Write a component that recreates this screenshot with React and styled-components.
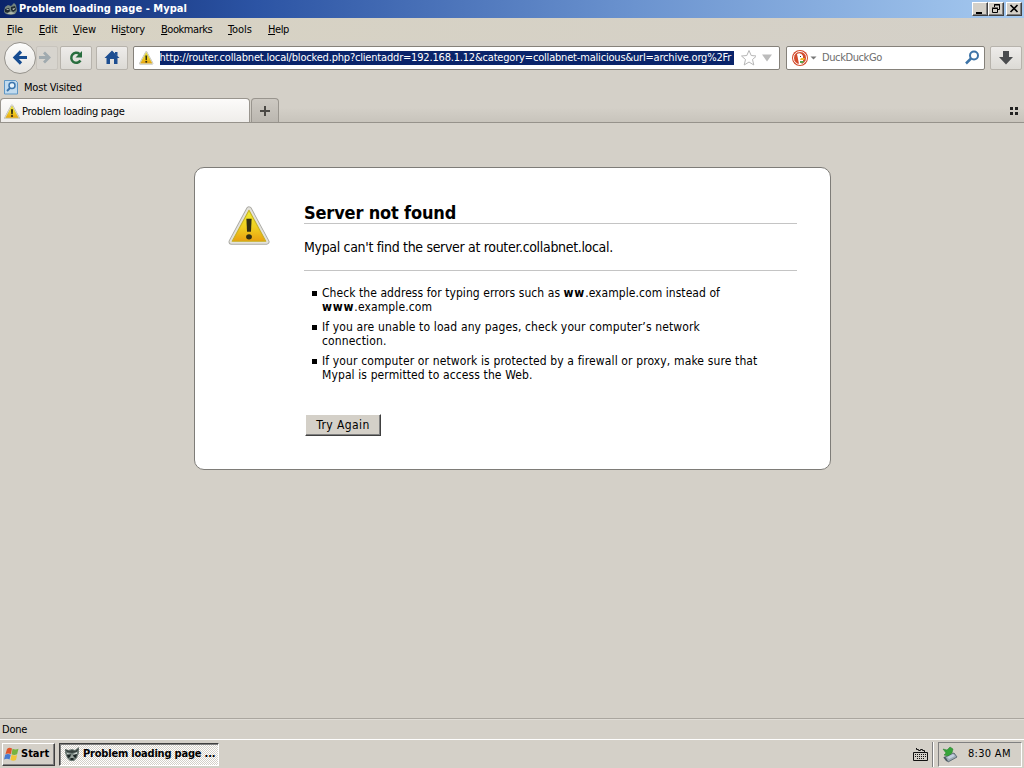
import React from 'react';
import styled, { createGlobalStyle, css } from 'styled-components';

const GlobalStyle = createGlobalStyle`
  * {
    box-sizing: border-box;
  }

  body {
    margin: 0;
    overflow: hidden;
    background: #d4d0c8;
    color: #000;
    font: 11px/14px 'DejaVu Sans Condensed', 'DejaVu Sans', sans-serif;
  }
`;

const Text = styled.span`
  white-space: nowrap;
  letter-spacing: ${props => props.$spacing || 0}px;
`;

const Window = styled.div`
  width: 1024px;
  height: 768px;
  display: flex;
  flex-direction: column;
`;

const TitleBar = styled.div`
  height: 18px;
  display: flex;
  align-items: center;
  padding: 0 2px 0 3px;
  background: linear-gradient(90deg, #0a246a, #2c54a4 25%, #6b93cf 62%, #a6caf0);
  color: #fff;
  font-weight: bold;
`;

const Title = styled(Text)`
  flex: 1;
  margin-left: 1px;
`;

const raised = css`
  background: #d4d0c8;
  border: 1px solid;
  border-color: #fff #404040 #404040 #fff;
  box-shadow: inset -1px -1px #808080;
`;

const CaptionButton = styled.div`
  ${raised}
  width: 16px;
  height: 14px;
  margin-left: ${props => (props.$gap ? 2 : 0)}px;

  svg {
    display: block;
  }
`;

const MenuBar = styled.div`
  height: 23px;
  display: flex;
  align-items: center;
  padding-left: 7px;
  background: linear-gradient(90deg, #d8d3c3, #d4d0c8);
`;

const MenuItem = styled.div`
  width: ${props => props.$width}px;
  flex: none;
  white-space: nowrap;
  letter-spacing: ${props => props.$spacing || 0}px;

  &::first-letter {
    text-decoration: ${props => (props.$plain ? 'none' : 'underline')};
  }
`;

const NavBar = styled.div`
  height: 35px;
  display: flex;
  align-items: center;
  padding: 0 3px 2px 4px;
`;

const BackButton = styled.div`
  z-index: 1;
  width: 32px;
  height: 32px;
  flex: none;
  border: 1px solid #96938d;
  border-radius: 50%;
  background: linear-gradient(#fdfdfc, #e5e3df);
`;

const ToolButton = styled.div`
  width: ${props => props.$width || 32}px;
  height: 24px;
  flex: none;
  display: flex;
  align-items: center;
  justify-content: center;
  border: 1px solid ${props => (props.$dim ? '#c8c4bd' : '#b7b3ac')};
  border-radius: 2px;
  background: ${props =>
    props.$dim ? '#d7d4ce' : 'linear-gradient(#eeecea, #dcdad5)'};
  margin-left: ${props => props.$gap || 0}px;
`;

const Field = styled.div`
  height: 24px;
  width: ${props => props.$width}px;
  flex: none;
  display: flex;
  align-items: center;
  margin-left: ${props => props.$gap}px;
  padding: 0 5px;
  border: 1px solid #85817a;
  border-radius: 2px;
  background: #fff;
`;

const Url = styled(Text)`
  width: 574px;
  height: 14px;
  flex: none;
  margin-left: 6px;
  margin-right: 6px;
  overflow: hidden;
  background: #0a246a;
  color: #fff;
`;

const Placeholder = styled(Text)`
  flex: 1;
  color: #6d6d6d;
`;

const BookmarkBar = styled.div`
  height: 22px;
  display: flex;
  align-items: center;
  gap: 6px;
  padding: 2px 0 0 4px;
`;

const TabStrip = styled.div`
  height: 25px;
  display: flex;
  align-items: flex-end;
  border-bottom: 1px solid #96928b;
  background: linear-gradient(#d4d0c8 40%, #c8c4bc);
`;

const Tab = styled.div`
  width: 250px;
  height: 24px;
  display: flex;
  align-items: center;
  gap: 2px;
  padding: 2px 0 0 3px;
  border: 1px solid #99958e;
  border-width: 1px 1px 0;
  border-radius: 4px 4px 0 0;
  background: linear-gradient(#fcfbfa, #efedea);
`;

const NewTab = styled.div`
  width: 28px;
  height: 24px;
  margin-left: 1px;
  display: flex;
  align-items: center;
  justify-content: center;
  border: 1px solid #99958e;
  border-bottom: 0;
  border-radius: 4px 4px 0 0;
  background: linear-gradient(#cdc9c2, #bbb7b0);
`;

const TabGroups = styled.svg`
  margin: 0 5px 7px auto;
`;

const Page = styled.div`
  flex: 1;
  padding: 44px 193px 0 194px;
`;

const ErrorCard = styled.div`
  height: 303px;
  display: flex;
  align-items: flex-start;
  padding: 35px 33px 0 33px;
  border: 1px solid #7e7c78;
  border-radius: 10px;
  background: #fff;
`;

const WarningImage = styled.div`
  width: 76px;
  flex: none;
  padding-top: 2px;
`;

const ErrorBody = styled.div`
  flex: 1;
`;

const Heading = styled.h1`
  height: 21px;
  margin: 0;
  border-bottom: 1px solid #c4c4c4;
  font-size: 18px;
  line-height: 20px;
`;

const ShortText = styled.div`
  height: 47px;
  padding-top: 13px;
  border-bottom: 1px solid #c4c4c4;
  font-size: 14px;
  line-height: 20px;
`;

const Tips = styled.ul`
  margin: 15px 0 0;
  padding: 0 0 0 18px;
  list-style: none;
  font-size: 12px;
  line-height: 14px;

  b {
    letter-spacing: 0.8px;
  }
`;

const Tip = styled.li`
  margin-bottom: 6px;

  &::before {
    content: '';
    float: left;
    width: 5px;
    height: 5px;
    margin: 5px 0 0 -10px;
    background: #000;
  }
`;

const Line = styled(Text)`
  display: block;
`;

const RetryButton = styled.button`
  ${raised}
  display: block;
  width: 76px;
  height: 22px;
  margin: 32px 0 0 1px;
  padding: 0;
  font: 12px/14px 'DejaVu Sans Condensed', 'DejaVu Sans', sans-serif;
`;

const StatusBar = styled.div`
  height: 21px;
  padding: 4px 2px 0;
  border-top: 1px solid #aaa69f;
  box-shadow: inset 0 1px #e0ddd7;
`;

const TaskBar = styled.div`
  height: 29px;
  display: flex;
  align-items: center;
  padding: 0 2px;
  border-top: 1px solid #fff;
`;

const StartButton = styled.div`
  ${raised}
  width: 53px;
  height: 23px;
  display: flex;
  align-items: center;
  gap: 1px;
  padding: 0 1px;
  font-weight: bold;
`;

const TaskButton = styled.div`
  width: 160px;
  height: 23px;
  margin-left: 4px;
  display: flex;
  align-items: center;
  gap: 3px;
  padding-left: 4px;
  border: 1px solid;
  border-color: #404040 #fff #fff #404040;
  box-shadow: inset 1px 1px #808080;
  background: repeating-conic-gradient(#fff 0 25%, #d4d0c8 0 50%) 0 0 / 2px 2px;
  font-weight: bold;
`;

const KeyboardIcon = styled.svg`
  margin: 0 3px 0 auto;
`;

const Tray = styled.div`
  width: 84px;
  height: 25px;
  margin-left: 4px;
  display: flex;
  align-items: center;
  gap: 10px;
  padding-left: 3px;
  border: 1px solid;
  border-color: #808080 #fff #fff #808080;
`;

const TrayDivider = styled.div`
  width: 2px;
  height: 25px;
  border-left: 1px solid #808080;
  border-right: 1px solid #fff;
`;

const Warning = ({ size = 16, id }) => (
  <svg width={size} height={size} viewBox="0 0 16 16">
    <defs>
      <linearGradient id={id} x1="0" y1="0" x2="0" y2="1">
        <stop offset="0" stopColor="#eeee35" />
        <stop offset="0.55" stopColor="#f0cf20" />
        <stop offset="1" stopColor="#e9a010" />
      </linearGradient>
    </defs>
    <path
      d="M8 1.6 14.7 14H1.3Z"
      fill="#aaa9a2"
      stroke="#aaa9a2"
      strokeWidth="2.2"
      strokeLinejoin="round"
    />
    <path
      d="M8 1.6 14.7 14H1.3Z"
      fill="#e4e3dd"
      stroke="#e4e3dd"
      strokeWidth="1.5"
      strokeLinejoin="round"
    />
    <path
      d="M8 2 14.4 13.8H1.6Z"
      fill={`url(#${id})`}
      stroke="#c6b125"
      strokeWidth="0.4"
      strokeLinejoin="round"
    />
    <path d="M7 5.2h2l-.25 5h-1.5Z" fill="#302d14" />
    <ellipse cx="8" cy="12.1" rx="1.1" ry="1" fill="#302d14" />
  </svg>
);

const Raccoon = () => (
  <svg width="16" height="16" viewBox="0 0 16 16">
    <path d="m1 3 3 1 4-1 3 1 4-3v6l-2 5-3 3H6l-3-3-2-5Z" fill="#6c7a75" />
    <path d="m1 3 4 2 3-1 3 1 4-3-2 4-5 1-5-1Z" fill="#37423f" />
    <path d="m3 7 4 1-1 1-3-1Zm10-1-4 2 1 1 3-1Z" fill="#cdd5d1" />
    <path d="m3 9 4-1-1 3-2 1Zm10-1-4 1 1 2 2 1Z" fill="#1c2625" />
    <path d="m8 8 2 4-2 1-2-1Z" fill="#98a39d" />
    <path d="M6.500 12h3v2h-3Z" fill="#1c2625" />
  </svg>
);

const TitleIcon = () => (
  <svg width="15" height="16" viewBox="0 0 15 16">
    <path d="m2 6 3-2 3 1 3-3 2 2 1 6-2 3-4 1-5-1-2-2Z" fill="#74847d" />
    <path d="m2 8 4-1 1 3-2 2-3-1Zm6-2 4-1 1 4-3 2-2-2Z" fill="#202a30" />
    <path d="m3 9 2-1 1 1Zm6-1 3-1-1 2Z" fill="#dde3db" />
    <path d="m4 12 4-1 4 1-2 1H5Z" fill="#b3bbae" />
  </svg>
);

const WindowsFlag = () => (
  <svg width="16" height="16" viewBox="0 0 16 16">
    <path d="M3 3q2-2 5-.5L7 8Q4 7 1.5 8Z" fill="#df552b" />
    <path d="M8.5 2.800q3 1.4 6 0l-1.400 5.500q-3 1.300-5.500 0Z" fill="#78b33f" />
    <path d="M1.3 8.500q3-1 5.500.200L5.500 13.500Q3 12.200 0 13.500Z" fill="#487bd0" />
    <path d="M7.500 8.800q3 1.200 5.600.1L12 14q-2.700 1.400-5.500 0Z" fill="#f1c536" />
  </svg>
);

const MENU = [
  ['File', 32, -0.1],
  ['Edit', 34, -0.2],
  ['View', 38, -0.1],
  ['History', 50, -0.2, true],
  ['Bookmarks', 67, -0.45],
  ['Tools', 40, -0.1],
  ['Help', 40, -0.4],
];

const App = () => (
  <>
    <GlobalStyle />
    <Window>
      <TitleBar>
        <TitleIcon />
        <Title $spacing={0.04}>Problem loading page - Mypal</Title>
        <CaptionButton>
          <svg width="14" height="12">
            <path d="M3 9h6v2H3Z" />
          </svg>
        </CaptionButton>
        <CaptionButton>
          <svg width="14" height="12" fill="none" stroke="#000">
            <path d="M5.5 4V1.5h5v5H9M5 2h6M3.5 5.5h5v4h-5ZM3 5h6" />
          </svg>
        </CaptionButton>
        <CaptionButton $gap>
          <svg width="14" height="12" stroke="#000" strokeWidth="1.6">
            <path d="m3.5 2 7 7m0-7-7 7" />
          </svg>
        </CaptionButton>
      </TitleBar>

      <MenuBar>
        {MENU.map(([label, width, spacing, plain]) => (
          <MenuItem key={label} $width={width} $spacing={spacing} $plain={plain}>
            {plain ? (
              <>
                Hi<u>s</u>tory
              </>
            ) : (
              label
            )}
          </MenuItem>
        ))}
      </MenuBar>

      <NavBar>
        <BackButton>
          <svg width="30" height="30" fill="none">
            <path
              d="M22 14.500H10m6-6L10 14.500l6 6"
              stroke="#164c91"
              strokeWidth="3.200"
            />
          </svg>
        </BackButton>
        <ToolButton $width={22} $dim>
          <svg width="16" height="16" fill="none">
            <path
              d="M0 7.500h9M5 2.500 10 7.500l-5 5"
              stroke="#a0aaaf"
              strokeWidth="2.800"
            />
          </svg>
        </ToolButton>
        <ToolButton $gap={2}>
          <svg width="18" height="18" fill="none">
            <path
              d="M13.500 11.500A5 5 0 1 1 12.500 5"
              stroke="#286d3e"
              strokeWidth="2.500"
            />
            <path d="M15 2v6.500H8.500Z" fill="#286d3e" />
          </svg>
        </ToolButton>
        <ToolButton $gap={4}>
          <svg width="18" height="18" fill="#1d4e91">
            <path d="m9 1.500 7.500 7.500h-2v6H11v-5H7v5H3.500V9h-2Z" />
            <path d="M12 3h2.500v4L12 5Z" />
          </svg>
        </ToolButton>

        <Field $width={647} $gap={5}>
          <Warning id="urlWarning" />
          <Url $spacing={-0.185}>
            http://router.collabnet.local/blocked.php?clientaddr=192.168.1.12&amp;category=collabnet-malicious&amp;url=archive.org%2Fr
          </Url>
          <svg width="18" height="18" fill="#fff" stroke="#b6b6b6">
            <path d="m9 1.500 2.200 5 5.300.5-4 3.500 1.300 5.500L9 13l-4.800 3 1.300-5.500-4-3.500 5.300-.5Z" />
          </svg>
          <svg width="20" height="18" fill="#bcbcbc">
            <path d="M6 5.500h10l-5 7Z" />
          </svg>
        </Field>

        <Field $width={199} $gap={6}>
          <svg width="16" height="16" viewBox="0 0 16 16">
            <circle cx="8" cy="8" r="8" fill="#d34b2c" />
            <circle cx="8" cy="8" r="6.500" fill="#d34b2c" stroke="#fff" />
            <path d="M5 4q4-2 6 2v6l-2 2H7Z" fill="#fff" />
            <path d="M9 8h4l-1 2H8Z" fill="#f2b82c" />
            <path d="m8 11 4 0-1 2-3 0Z" fill="#58a64a" />
            <path d="M8 6h1v1H8Z" fill="#333" />
          </svg>
          <svg width="14" height="14" fill="#777">
            <path d="M2.500 5.500h6l-3 3Z" />
          </svg>
          <Placeholder $spacing={-0.4}>DuckDuckGo</Placeholder>
          <svg width="15" height="16" fill="none" stroke="#3d73a7">
            <circle cx="10" cy="5.500" r="4" strokeWidth="2" />
            <path d="m7 8.500-5 5" strokeWidth="2.500" />
          </svg>
        </Field>

        <ToolButton $gap={5}>
          <svg width="16" height="18" fill="#4a4c4e">
            <path d="M5 2h6v6h4l-7 7.500L1 8h4Z" />
          </svg>
        </ToolButton>
      </NavBar>

      <BookmarkBar>
        <svg width="14" height="16">
          <path d="M.5 .500h11l2 2v11.500H.5Z" fill="#c1dbef" stroke="#5f97c5" />
          <circle cx="8" cy="5.500" r="3" fill="#e8f4fc" stroke="#3b75ad" strokeWidth="1.500" />
          <path d="m6 8-3 3" stroke="#3b75ad" strokeWidth="2" />
        </svg>
        <Text $spacing={-0.2}>Most Visited</Text>
      </BookmarkBar>

      <TabStrip>
        <Tab>
          <Warning id="tabWarning" />
          <Text $spacing={-0.27}>Problem loading page</Text>
        </Tab>
        <NewTab>
          <svg width="12" height="12" stroke="#4b4945" strokeWidth="2">
            <path d="M6 1v10M1 6h10" />
          </svg>
        </NewTab>
        <TabGroups width="9" height="9" fill="#222">
          <path d="M0 1h3v3H0Zm5 0h3v3H5ZM0 6h3v3H0Zm5 0h3v3H5Z" />
        </TabGroups>
      </TabStrip>

      <Page>
        <ErrorCard>
          <WarningImage>
            <Warning size={42} id="pageWarning" />
          </WarningImage>
          <ErrorBody>
            <Heading>
              <Text $spacing={-0.16}>Server not found</Text>
            </Heading>
            <ShortText>
              <Text $spacing={-0.32}>Mypal can't find the server at router.collabnet.local.</Text>
            </ShortText>
            <Tips>
              <Tip>
                <Line $spacing={0.06}>
                  Check the address for typing errors such as <b>ww</b>.example.com instead of
                </Line>
                <Line $spacing={0.12}>
                  <b>www</b>.example.com
                </Line>
              </Tip>
              <Tip>
                <Line $spacing={0.13}>If you are unable to load any pages, check your computer’s network</Line>
                <Line $spacing={0.15}>connection.</Line>
              </Tip>
              <Tip>
                <Line $spacing={0.13}>If your computer or network is protected by a firewall or proxy, make sure that</Line>
                <Line $spacing={0.11}>Mypal is permitted to access the Web.</Line>
              </Tip>
            </Tips>
            <RetryButton>
              <Text $spacing={0.4}>Try Again</Text>
            </RetryButton>
          </ErrorBody>
        </ErrorCard>
      </Page>

      <StatusBar>
        <Text $spacing={-0.2}>Done</Text>
      </StatusBar>

      <TaskBar>
        <StartButton>
          <WindowsFlag />
          <Text>Start</Text>
        </StartButton>
        <TaskButton>
          <Raccoon />
          <Text $spacing={-0.2}>Problem loading page ...</Text>
        </TaskButton>
        <KeyboardIcon width="17" height="15" fill="none" stroke="#111">
          <path d="M1.500 5.500h14v8h-14ZM4.500 1v1.500h2v1h2v-1h2v1h2V5" />
          <path d="M3 7.500h11M3 9.500h11M5 11.500h7" strokeDasharray="1 1" />
        </KeyboardIcon>
        <TrayDivider />
        <Tray>
          <svg width="16" height="17">
            <path d="m3 11 9-4 3 4-9 5Z" fill="#9eabb5" stroke="#5f6e78" />
            <path d="m5 11 6-3 2 2-6 3Z" fill="#c0cfdf" />
            <path
              d="m1 3 4 1 3-3 3 2-1 4-4 3-4-1 2-2Z"
              fill="#36a43a"
              stroke="#257c2c"
              strokeWidth=".500"
            />
            <path d="m2 11 3 4" stroke="#4b5961" strokeWidth="1.500" />
          </svg>
          <Text $spacing={0.3}>8:30 AM</Text>
        </Tray>
      </TaskBar>
    </Window>
  </>
);

export default App;
